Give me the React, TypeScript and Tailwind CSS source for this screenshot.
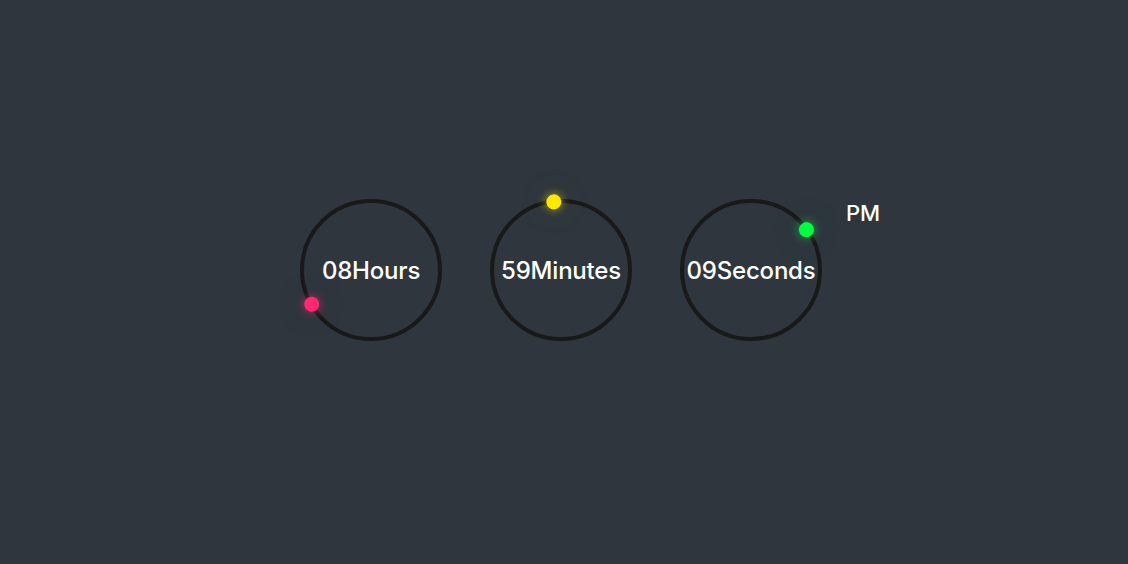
import React from 'react';

type Ring = { value: string; label: string; angle: number; dot: string; glow: string };

const rings: Ring[] = [
  { value: '08', label: 'Hours', angle: 240, dot: 'bg-[#ff2972]', glow: 'shadow-[0_0_10px_#ff2972aa,0_0_60px_#ff29722e]' },
  { value: '59', label: 'Minutes', angle: 354, dot: 'bg-[#fee800]', glow: 'shadow-[0_0_10px_#fee800aa,0_0_60px_#fee8002e]' },
  { value: '09', label: 'Seconds', angle: 54, dot: 'bg-[#04fc43]', glow: 'shadow-[0_0_10px_#04fc43aa,0_0_60px_#04fc432e]' },
];

function Circle({ ring, children }: { ring: Ring; children?: React.ReactNode }) {
  return (
    <div className="relative w-[142px] h-[142px] rounded-full border-4 border-[#191919] flex items-center justify-center">
      <div className="absolute inset-0" style={{ transform: `rotate(${ring.angle}deg)` }}>
        <div className={`absolute left-1/2 -translate-x-1/2 top-[-9.5px] w-[15px] h-[15px] rounded-full ${ring.dot} ${ring.glow}`} />
      </div>
      <span className="relative text-white text-[24px] font-medium whitespace-nowrap tracking-[-0.2px] mt-[2px]">
        {ring.value}
        {ring.label}
      </span>
      {children}
    </div>
  );
}

export default function App() {
  return (
    <div className="w-full h-[564px] bg-[#2f363e] flex items-center justify-center font-['Inter',sans-serif] pr-[6px]">
      <div className="flex gap-[48px] mb-[24px]">
        {rings.map((r, i) => (
          <Circle key={r.label} ring={r}>
            {i === 2 && (
              <span className="absolute left-[162px] top-[-6px] text-white text-[22px] font-medium">PM</span>
            )}
          </Circle>
        ))}
      </div>
    </div>
  );
}
